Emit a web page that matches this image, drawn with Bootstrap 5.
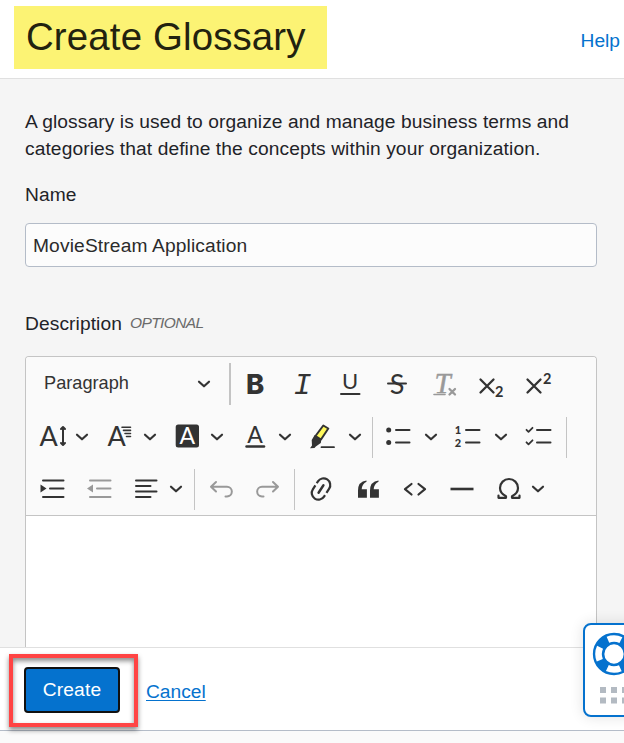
<!DOCTYPE html>
<html lang="en">
<head>
<meta charset="utf-8">
<meta name="viewport" content="width=device-width, initial-scale=1">
<title>Create Glossary</title>
<link rel="stylesheet" href="https://cdn.jsdelivr.net/npm/bootstrap@5.3.0/dist/css/bootstrap.min.css">
<style>
body{font-family:"Liberation Sans",Arial,sans-serif;font-size:19.2px;line-height:27px;letter-spacing:.09px;color:#1f2328;background:#fafafa;width:624px;height:743px}
.page-head{height:79px;border-bottom:1px solid #e0e0e0;padding:6px 4px 0 14px}
.title-mark{background:#fcf374;width:313px;height:63px;padding:8px 0 0 12px;font-size:38.4px;line-height:46px;letter-spacing:.15px;color:#22220f}
.help-link{color:#0572ce;margin-top:21px;letter-spacing:0}
.page-main{background:#f5f5f5;height:568px;padding:29px 27px 0 25px}
.name-label{margin-top:19px}
.name-field{height:44px;margin-top:15px;border:1px solid #b4bcc8;border-radius:4px;background:#fcfcfc;padding:2px 7px 0;font-size:19.2px;color:#2b2b2b;letter-spacing:.14px}
.desc-label{margin-top:43px}
.opt{font-size:15.5px;line-height:25px;color:#6b6b6b;letter-spacing:-.6px}
.editor{margin-top:19px;border:1px solid #c4c4c4;border-bottom:0;border-radius:4px 4px 0 0;height:291px}
.tools{background:#fafafa;height:159px;border-bottom:1px solid #c4c4c4;border-radius:3px 3px 0 0;padding-top:1px}
.tool-row{height:52px}
.tool{border:0;background:none;padding:0;color:#333;flex:none;display:flex;align-items:center}
.tool.off{color:#999}
.tool svg{display:block;overflow:visible;fill:none;stroke:currentColor;stroke-width:2;stroke-linecap:round;stroke-linejoin:round}
.tool text,.tool .solid{fill:currentColor;stroke:none}
.tool text{letter-spacing:0}
.lt{font-family:Lato,sans-serif}
.para{width:203px;padding-left:18px;font-size:18.2px;letter-spacing:0}
.para span{padding-bottom:2px}
.para .chev{margin-right:17px}
.w67{width:67px}.w68{width:68px}.w69{width:69px}.w70{width:70px}.w74{width:74px}
.chev{margin-left:auto;margin-right:8px}
.sep{width:1px;height:41px;background:#c4c4c4;flex:none}
.sep-wide{width:2px;height:42px}
.page-foot{height:84px;border-top:1px solid #e0e0e0;border-bottom:1px solid #b4bcc8}
.callout{width:129px;height:73px;border:4px solid #ff4444;margin:6px 0 0 9px;padding:9px 0 0 11px;box-shadow:0 3px 5px rgba(0,0,0,.45),inset 0 3px 5px rgba(0,0,0,.45)}
.create-btn{width:96px;height:46px;background:#0572ce;border:2px solid #111;border-radius:4px;color:#fff;font-size:19.2px;padding:0;line-height:40px;letter-spacing:.15px}
.create-btn:hover{background:#0572ce;color:#fff}
.cancel-link{color:#0572ce;margin:30px 0 0 8px;letter-spacing:0;text-underline-offset:2px;text-decoration-thickness:1px}
.dock{left:583px;top:623px;width:60px;height:94px;border:2px solid #0572ce;border-radius:8px;background:#fff;box-shadow:0 0 14px rgba(0,0,0,.12)}
</style>
<script src="https://cdn.jsdelivr.net/npm/bootstrap@5.3.0/dist/js/bootstrap.bundle.min.js"></script>
</head>
<body class="position-relative overflow-hidden">
<svg class="d-none"><defs>
<path id="cv" d="M3 11.700l5 4.600 5-4.600" stroke-width="2.200"/>
</defs></svg>

<header class="page-head bg-white d-flex justify-content-between align-items-start">
  <h1 class="title-mark m-0 fw-normal">Create Glossary</h1>
  <a href="#" class="help-link text-decoration-none">Help</a>
</header>

<main class="page-main overflow-hidden">
  <p class="mb-0 text-nowrap">A glossary is used to organize and manage business terms and<br>categories that define the concepts within your organization.</p>
  <label for="gname" class="name-label d-block">Name</label>
  <input id="gname" class="name-field form-control" value="MovieStream Application">
  <div class="desc-label d-flex gap-2"><span>Description</span><em class="opt">OPTIONAL</em></div>
  <section class="editor bg-white">
    <div class="tools">
      <div class="tool-row d-flex align-items-center">
        <button class="tool para"><span>Paragraph</span><svg class="chev" width="16" height="28"><use href="#cv"/></svg></button>
        <div class="sep sep-wide" style="margin-right:1px"></div>
        <button class="tool" aria-label="Bold"><svg width="47" height="28"><text x="14" y="24" font-family="Inter" font-weight="800" font-size="27.500">B</text></svg></button>
        <button class="tool" aria-label="Italic"><svg width="47" height="28"><text x="14.500" y="24" font-family="Liberation Mono" font-style="italic" font-size="30">I</text></svg></button>
        <button class="tool" aria-label="Underline"><svg width="47" height="28"><text class="lt" x="24" y="19.300" text-anchor="middle" font-size="22">U</text><path d="M15 24h18.500"/></svg></button>
        <button class="tool" aria-label="Strikethrough"><svg width="47" height="28"><text class="lt" x="24" y="23.800" text-anchor="middle" font-size="27">S</text><path d="M15 13.500h18"/></svg></button>
        <button class="tool off" aria-label="Remove format"><svg width="47" height="28"><text x="14.500" y="22.500" font-family="Liberation Serif" font-style="italic" font-size="29" style="stroke:currentColor;stroke-width:.5">T</text><path d="M14 24.500h11" stroke-width="1.600"/><path d="M29.500 19l5.500 5.500m0-5.500l-5.500 5.500" stroke-width="2.300"/></svg></button>
        <button class="tool" aria-label="Subscript"><svg width="47" height="28"><path d="M13.500 9.500l13 13m0-13l-13 13" stroke-width="2.300"/><text class="lt" x="28" y="27" font-weight="700" font-size="14.500">2</text></svg></button>
        <button class="tool" aria-label="Superscript"><svg width="47" height="28"><path d="M13.500 9.500l13 13m0-13l-13 13" stroke-width="2.300"/><text class="lt" x="29" y="13.700" font-weight="700" font-size="14.500">2</text></svg></button>
      </div>
      <div class="tool-row d-flex align-items-center ms-1 mt-px" style="margin-top:1px">
        <button class="tool w68" aria-label="Font size"><svg width="40" height="28"><text class="lt" x="9.500" y="23" font-size="27">A</text><path d="M33 4.500v17M31 6l2-2 2 2M31 20l2 2 2-2" stroke-width="2"/></svg><svg class="chev" width="16" height="28"><use href="#cv"/></svg></button>
        <button class="tool w68" aria-label="Font family"><svg width="40" height="28"><text class="lt" x="9.500" y="23" font-size="27">A</text><path d="M24 4.300h8.500M25.500 7.400h7M27 10.500h5.500M28.500 13.500h4" stroke-width="1.600"/></svg><svg class="chev" width="16" height="28"><use href="#cv"/></svg></button>
        <button class="tool w67" aria-label="Background color"><svg width="40" height="28"><rect class="solid" x="9.700" y="1.500" width="23.300" height="23" rx="2.500"/><text class="lt" x="21.300" y="21" text-anchor="middle" font-size="23" style="fill:#fff">A</text></svg><svg class="chev" width="16" height="28"><use href="#cv"/></svg></button>
        <button class="tool w68" aria-label="Font color"><svg width="40" height="28"><text class="lt" x="22" y="19.500" text-anchor="middle" font-size="23">A</text><path d="M13.500 23.500h17.500" stroke-width="2.500"/></svg><svg class="chev" width="16" height="28"><use href="#cv"/></svg></button>
        <button class="tool w70" aria-label="Highlight"><svg width="40" height="28"><path d="M22.300 2.500l5 3-7.300 11-5.500-3.500z" style="fill:#fff95c"/><path class="solid" d="M13.700 12l6.600 4.700-.5 3.300-5 3.500-1.300 1.500-4.500.2 2-2.700-.3-5.500z"/><path d="M20.500 24.200h12.500" stroke-width="1.800"/></svg><svg class="chev" width="16" height="28"><use href="#cv"/></svg></button>
        <div class="sep" style="margin-left:1px"></div>
        <button class="tool w74" aria-label="Bulleted list"><svg width="40" height="28"><circle class="solid" cx="15.700" cy="7" r="2.500"/><circle class="solid" cx="15.700" cy="19.500" r="2.500"/><path d="M23 7h13.500M23 19.500h13.500"/></svg><svg class="chev" width="16" height="28"><use href="#cv"/></svg></button>
        <button class="tool w70" aria-label="Numbered list"><svg width="40" height="28"><text class="lt" x="7.800" y="10.500" font-weight="900" font-size="11">1</text><text class="lt" x="7.800" y="24" font-weight="900" font-size="11">2</text><path d="M19 7h13.500M19 19.500h13.500"/></svg><svg class="chev" width="16" height="28"><use href="#cv"/></svg></button>
        <button class="tool" aria-label="To-do list"><svg width="47" height="28"><path d="M9.500 6.800l2 2 4-4M9.500 19.300l2 2 4-4" stroke-width="1.800"/><path d="M20 7h13.500M20 19.500h13.500"/></svg></button>
        <div class="sep" style="margin-left:2px"></div>
      </div>
      <div class="tool-row d-flex align-items-center" style="margin-left:2px">
        <button class="tool" aria-label="Increase indent"><svg width="47" height="28"><path class="solid" d="M12.500 9.500l6 4-6 4z"/><path d="M15 5.500h20.500M22 13.500h13.500M15 22h20.500"/></svg></button>
        <button class="tool off" aria-label="Decrease indent"><svg width="47" height="28"><path class="solid" d="M18 9.500l-6 4 6 4z"/><path d="M15 5.500h20.500M22 13.500h13.500M15 22h20.500"/></svg></button>
        <button class="tool w70" aria-label="Alignment"><svg width="40" height="28"><path d="M14 5.500h20.500M14 11h14.500M14 16.500h20.500M14 22h14.500"/></svg><svg class="chev" width="16" height="28"><use href="#cv"/></svg></button>
        <div class="sep" style="margin:0 2px"></div>
        <button class="tool off" aria-label="Undo"><svg width="47" height="28"><path d="M19 7l-5 4.700 5 4.800M14.500 11.700h15.500a4.800 4.800 0 0 1 0 9.700h-1.500"/></svg></button>
        <button class="tool off" aria-label="Redo"><svg width="47" height="28"><path d="M29 7l5 4.700-5 4.800M33.500 11.700h-15.500a4.800 4.800 0 0 0 0 9.700h1.500"/></svg></button>
        <div class="sep" style="margin:0 2px 0 3px"></div>
        <button class="tool" aria-label="Link"><svg width="47" height="28"><g transform="rotate(33 24 14)"><path d="M24 9.500v9" stroke-width="2.400"/><path d="M17.300 11.500v-2.200a6.700 6.700 0 0 1 13.400 0v5M30.700 17v1.700a6.700 6.700 0 0 1-13.400 0v-4.700" stroke-width="2.200" stroke-linecap="butt"/></g></svg></button>
        <button class="tool" aria-label="Block quote"><svg width="47" height="28"><path class="solid" d="M22.500 5.500q-8.500 1-8.500 10v7.300h8.900v-8.500h-5.200q.3-5.300 4.800-7.500zM34.500 5.500q-8.500 1-8.500 10v7.300h8.900v-8.500h-5.200q.3-5.300 4.800-7.500z"/></svg></button>
        <button class="tool" aria-label="Source"><svg width="47" height="28"><path d="M20.500 9l-6.500 5.200 6.500 5.300M27.500 9l6.500 5.200-6.500 5.300" stroke-width="2.200"/></svg></button>
        <button class="tool" aria-label="Horizontal line"><svg width="47" height="28"><path d="M12.500 14h23" stroke-width="2.600" stroke-linecap="butt"/></svg></button>
        <button class="tool w69" aria-label="Special characters"><svg width="40" height="28"><path d="M13.500 20.500v2.300h7.500v-1.500q-6-3-6-8.300a9 9 0 0 1 18 0q0 5.300-6 8.300v1.500h7.500v-2.300" stroke-width="2.200"/></svg><svg class="chev" width="16" height="28"><use href="#cv"/></svg></button>
      </div>
    </div>
  </section>
</main>

<footer class="page-foot bg-white d-flex align-items-start">
  <div class="callout"><button class="btn create-btn">Create</button></div>
  <a href="#" class="cancel-link">Cancel</a>
</footer>

<aside class="dock position-absolute" aria-label="Support">
  <svg width="50" height="90" class="d-block">
    <circle cx="29" cy="29" r="15.400" fill="none" stroke="#0572ce" stroke-width="11.500"/>
    <circle cx="29" cy="29" r="15.500" fill="none" stroke="#fff" stroke-width="6.600" stroke-dasharray="13.347 11" stroke-dashoffset="6.670"/>
    <g fill="#b3bac2"><path d="M15 62h6v6h-6zM26 62h6v6h-6zM37 62h6v6h-6zM15 72.500h6v6h-6zM26 72.500h6v6h-6zM37 72.500h6v6h-6z"/></g>
  </svg>
</aside>
</body>
</html>
